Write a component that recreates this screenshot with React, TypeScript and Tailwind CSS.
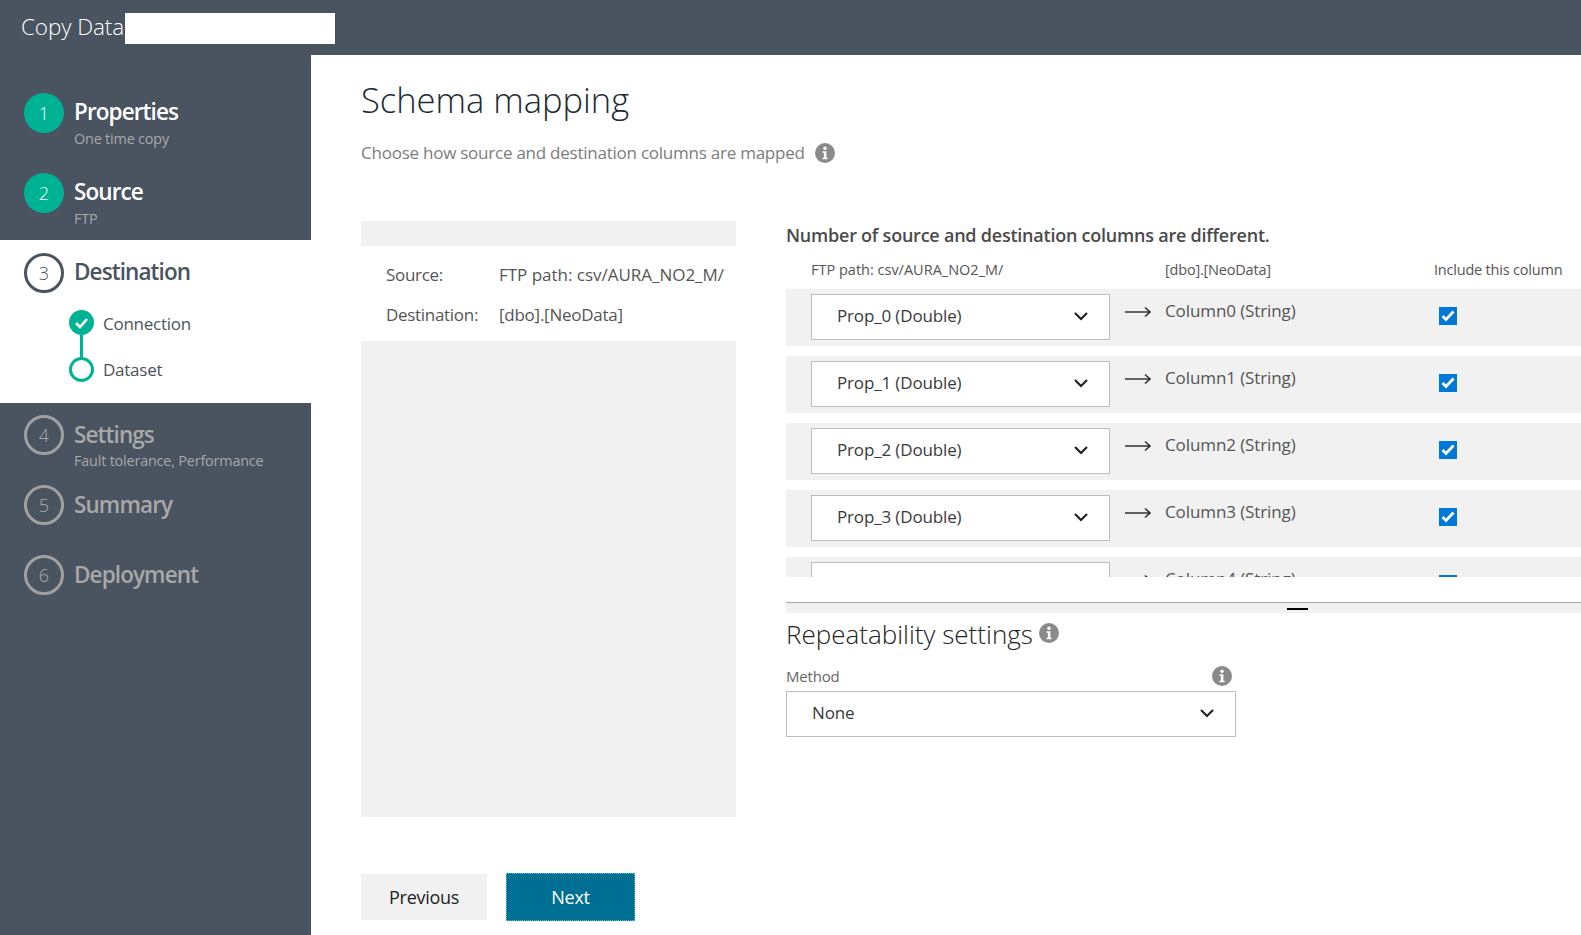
import React from "react";

const font = { fontFamily: '"Open Sans", "Noto Sans", sans-serif' };

function Info({ size = 20, className = "" }: { size?: number; className?: string }) {
  return (
    <svg width={size} height={size} viewBox="0 0 20 20" className={className}>
      <circle cx="10" cy="10" r="10" fill="#8a8a8a" />
      <circle cx="10" cy="5.2" r="1.7" fill="#fff" />
      <path d="M7.6 8.2h3.8v6.6h1.2v1.5H7.4v-1.5h1.4V9.7H7.6z" fill="#fff" />
    </svg>
  );
}

function Chevron() {
  return (
    <svg width="16" height="10" viewBox="0 0 16 10" fill="none" className="mb-[2px]">
      <path d="M2 2l6 6 6-6" stroke="#222" strokeWidth="2.2" />
    </svg>
  );
}

function Arrow() {
  return (
    <svg width="26" height="12" viewBox="0 0 26 12" fill="none">
      <path d="M0 6h25M20 1.5L25 6l-5 4.5" stroke="#333" strokeWidth="1.6" />
    </svg>
  );
}

function Select({ label, className }: { label: string; className: string }) {
  return (
    <div className={`flex h-[46px] items-center justify-between border border-[#bdbdbd] bg-white text-[17px] tracking-[-0.15px] text-[#3a3a3a] ${className}`}>
      <span className="mb-[3px]">{label}</span>
      <Chevron />
    </div>
  );
}

function Step({
  n,
  title,
  sub,
  state,
  className,
}: {
  n: number;
  title: string;
  sub?: string;
  state: "done" | "current" | "todo";
  className: string;
}) {
  const circle =
    state === "done"
      ? "bg-[#00b294] text-white"
      : state === "current"
        ? "border-[3px] border-[#4a5360] text-[#4a5360]"
        : "border-[3px] border-[#a0a0a0] text-[#a8a8a8]";
  const titleColor = state === "done" ? "text-white" : state === "current" ? "text-[#4a5360]" : "text-[#a8a8a8]";
  const offset = state === "todo" ? "pt-[3px]" : "pt-[2px]";
  const subGap = state === "todo" ? "-mt-[1px]" : "mt-0";
  return (
    <div className={`flex gap-[10px] pl-6 ${className}`}>
      <div className={`flex h-10 w-10 shrink-0 items-center justify-center rounded-full text-[18px] font-light ${circle}`}>{n}</div>
      <div className={`flex flex-col ${offset}`}>
        <span className={`h-[34px] text-[22.5px] leading-[34px] font-semibold tracking-[-0.9px] ${titleColor}`}>{title}</span>
        {sub && <span className={`text-[14.4px] leading-[20px] tracking-[-0.18px] text-[#a8a8a8] ${subGap}`}>{sub}</span>}
      </div>
    </div>
  );
}

const rows = [
  ["Prop_0 (Double)", "Column0 (String)"],
  ["Prop_1 (Double)", "Column1 (String)"],
  ["Prop_2 (Double)", "Column2 (String)"],
  ["Prop_3 (Double)", "Column3 (String)"],
  ["Prop_4 (Double)", "Column4 (String)"],
];

export default function App() {
  return (
    <div className="flex h-[935px] w-[1581px] flex-col overflow-hidden bg-white" style={font}>
      <header className="flex h-[55px] shrink-0 items-start bg-[#4a5360] pl-[21px]">
        <span className="mt-[10px] w-[104px] text-[22.5px] leading-[34px] font-light tracking-[-0.1px] whitespace-nowrap text-white">Copy Data</span>
        <div className="mt-[13px] h-[31px] w-[210px] bg-white" />
      </header>
      <div className="flex min-h-0 flex-1">
        <aside className="flex w-[311px] shrink-0 flex-col bg-[#4a5360]">
          <div className="h-[185px] pt-[38px]">
            <Step n={1} title="Properties" sub="One time copy" state="done" className="h-[80px]" />
            <Step n={2} title="Source" sub="FTP" state="done" className="h-[66px]" />
          </div>
          <div className="h-[163px] bg-white pt-[13px]">
            <Step n={3} title="Destination" state="current" className="h-[57px]" />
            <div className="flex pl-[69px]">
              <div className="flex w-[25px] flex-col items-center">
                <div className="flex h-[25px] w-[25px] items-center justify-center rounded-full bg-[#00b294]">
                  <svg width="15" height="12" viewBox="0 0 15 12" fill="none">
                    <path d="M2 6l4 4 7-8" stroke="#fff" strokeWidth="2.6" />
                  </svg>
                </div>
                <div className="h-[22px] w-[3px] bg-[#00b294]" />
                <div className="h-[25px] w-[25px] rounded-full border-[3px] border-[#00b294]" />
              </div>
              <div className="ml-[9px] flex flex-col pt-[1px] text-[17px] tracking-[-0.25px] text-[#4a5360]">
                <span className="h-[46px] leading-[25px]">Connection</span>
                <span className="leading-[25px]">Dataset</span>
              </div>
            </div>
          </div>
          <div className="pt-[12px]">
            <Step n={4} title="Settings" sub="Fault tolerance, Performance" state="todo" className="h-[70px]" />
            <Step n={5} title="Summary" state="todo" className="h-[70px]" />
            <Step n={6} title="Deployment" state="todo" className="h-[70px]" />
          </div>
        </aside>
        <main className="flex min-w-0 flex-1 flex-col pt-[21px] pl-[50px]">
          <h1 className="h-[48px] text-[34.5px] leading-[48px] font-light text-[#222a33]">Schema mapping</h1>
          <div className="mt-[15px] flex h-[28px] items-center text-[17px] tracking-[-0.24px] text-[#7c7c7c]">
            <span>Choose how source and destination columns are mapped</span>
            <Info className="ml-[10px]" />
          </div>
          <div className="mt-[54px] flex">
            <div className="flex h-[596px] w-[375px] shrink-0 flex-col bg-[#f1f1f1]">
              <div className="h-[25px] shrink-0" />
              <div className="h-[95px] shrink-0 bg-white pt-[15px] pl-[25px] text-[17px] tracking-[-0.3px] text-[#555]">
                <div className="flex h-[40px] leading-[28px]">
                  <span className="w-[113px]">Source:</span>
                  <span className="tracking-[-0.02px]">FTP path: csv/AURA_NO2_M/</span>
                </div>
                <div className="flex h-[40px] leading-[28px]">
                  <span className="w-[113px]">Destination:</span>
                  <span className="tracking-[-0.25px]">[dbo].[NeoData]</span>
                </div>
              </div>
            </div>
            <div className="ml-[50px] min-w-0 flex-1">
              <div className="h-[28px] text-[18px] leading-[28px] font-semibold tracking-[-0.23px] text-[#4a4a4a]">
                Number of source and destination columns are different.
              </div>
              <div className="mt-[9px] flex h-[24px] pl-[25px] text-[14.5px] leading-[24px] tracking-[-0.2px] text-[#555]">
                <span className="w-[354px] tracking-[0px]">FTP path: csv/AURA_NO2_M/</span>
                <span className="w-[269px]">[dbo].[NeoData]</span>
                <span>Include this column</span>
              </div>
              <div className="mt-[7px] h-[288px] overflow-hidden">
                {rows.map(([a, b]) => (
                  <div key={a} className="mb-[10px] flex h-[57px] bg-[#f1f1f1] pt-[5px] pl-[25px]">
                    <Select label={a} className="w-[299px] pr-[20px] pl-[25px]" />
                    <div className="mt-[12px] ml-[15px] h-[12px] leading-none">
                      <Arrow />
                    </div>
                    <span className="ml-[14px] w-[274px] text-[17px] leading-[34px] tracking-[-0.1px] text-[#555]">{b}</span>
                    <div className="mt-[13px] flex h-[18px] w-[18px] items-center justify-center bg-[#0078d7]">
                      <svg width="14" height="12" viewBox="0 0 14 12" fill="none">
                        <path d="M1.5 6l3.5 3.5 7.5-8" stroke="#fff" strokeWidth="2.8" />
                      </svg>
                    </div>
                  </div>
                ))}
              </div>
              <div className="relative mt-[25px] h-[11px] border-t border-[#a8a8a8] bg-[#f1f1f1]">
                <div className="absolute top-[5px] left-[501px] h-[2px] w-[21px] bg-black" />
              </div>
              <div className="mt-[3px] flex h-[36px] items-center text-[26px] font-light text-[#222]">
                <span>Repeatability settings</span>
                <Info className="mb-[2px] ml-[6px]" />
              </div>
              <div className="mt-[12px] flex h-[24px] w-[450px] items-center justify-between pr-[4px] text-[15px] tracking-[-0.2px] text-[#666]">
                <span>Method</span>
                <Info />
              </div>
              <Select label="None" className="mt-[3px] w-[450px] pr-[20px] pl-[25px]" />
            </div>
          </div>
          <div className="mt-[56px] flex items-center">
            <button className="h-[46px] w-[126px] bg-[#f1f1f1] text-[18px] tracking-[-0.3px] text-[#222]">Previous</button>
            <button className="ml-[19px] h-[48px] w-[129px] border border-dotted border-[#5cc4ec] bg-[#006f94] text-[18px] tracking-[-0.3px] text-white">
              Next
            </button>
          </div>
        </main>
      </div>
    </div>
  );
}
